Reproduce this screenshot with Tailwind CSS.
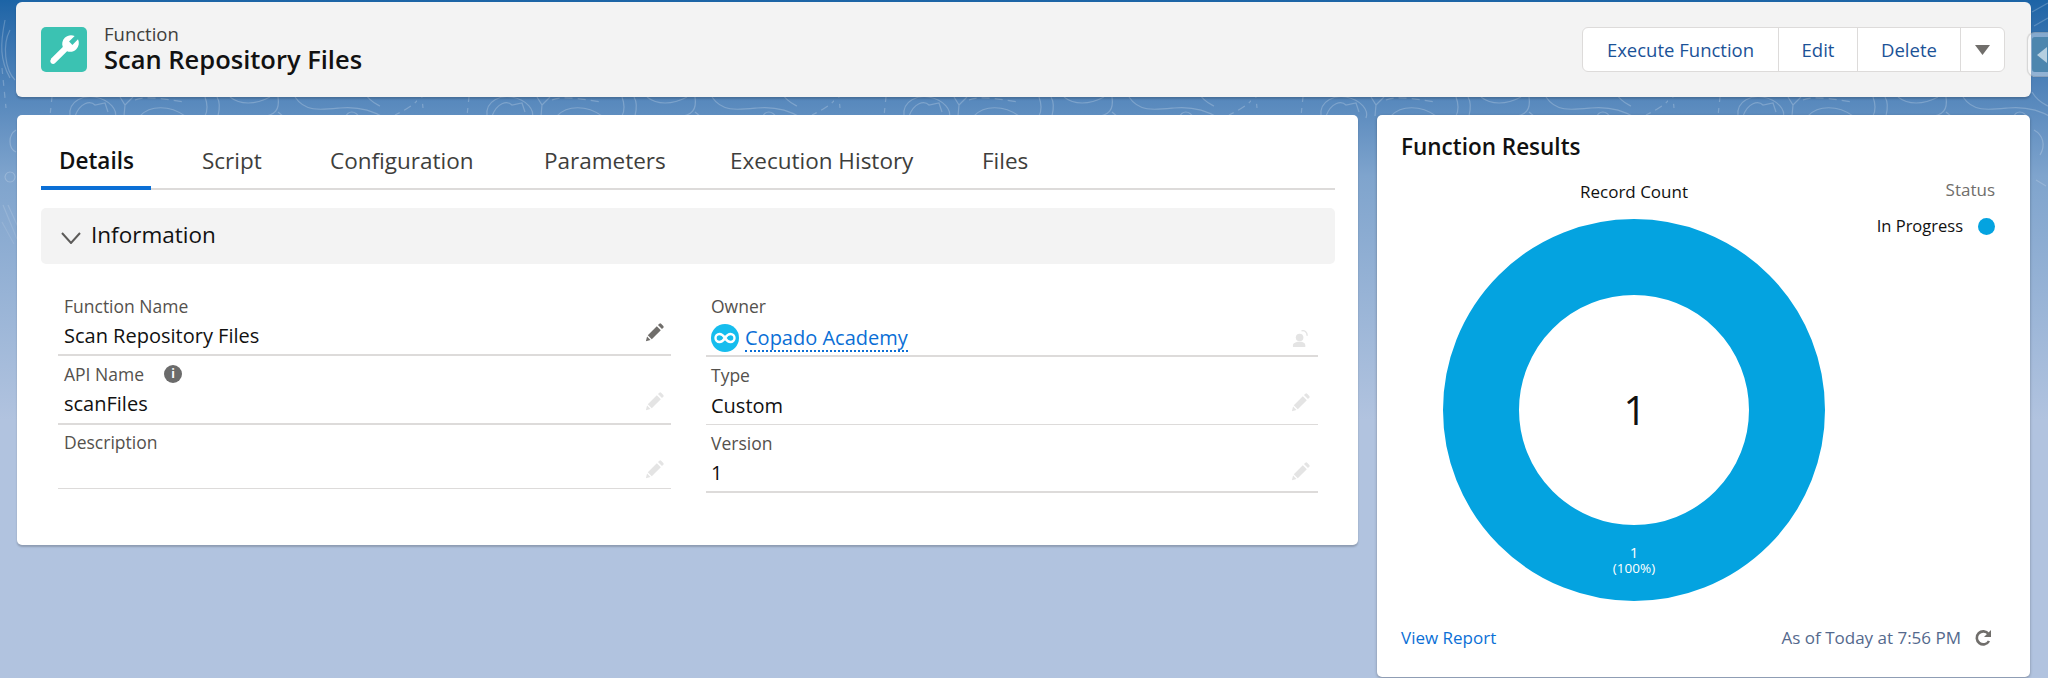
<!DOCTYPE html>
<html lang="en">
<head>
<meta charset="utf-8">
<script src="https://cdn.jsdelivr.net/npm/@tailwindcss/browser@4"></script>
<title>Scan Repository Files</title>
</head>
<body class="m-0 overflow-hidden">
<svg width="0" height="0" class="absolute">
  <defs>
    <symbol id="pencil" viewBox="0 0 20 20">
      <path fill="currentColor" d="M3.600 12.600 12.200 4l3.800 3.800-8.600 8.600zM2.900 13.800l3.300 3.300-4.400 1.200zM13.300 2.900l1.300-1.300a1.200 1.200 0 0 1 1.700 0l2.100 2.100a1.200 1.200 0 0 1 0 1.700l-1.300 1.300z"/>
    </symbol>
  </defs>
</svg>
<div class="relative w-[2048px] h-[678px] overflow-hidden bg-gradient-to-b from-[#1c64a6] via-[#7fa4cd] via-[26%] to-[#b1c3df] to-[62%] font-['Open_Sans',sans-serif]">

  <!-- decorative contour lines of the page background -->
  <svg class="absolute left-0 top-0 [mask-image:linear-gradient(to_bottom,black_55%,transparent)]" width="2048" height="290">
    <defs>
      <pattern id="contours" width="417" height="290" patternUnits="userSpaceOnUse">
        <g fill="none" stroke="#fff" stroke-opacity="0.22" stroke-width="1.200">
          <path d="M70 116C68 100 85 95 95 97 110 100 118 110 115 118"/>
          <path d="M75 116C80 103 90 100 95 105L105 103 108 112"/>
          <path stroke-dasharray="5 6" d="M52 97 50 116"/>
          <path d="M120 97 125 105 133 97M125 105 124 116"/>
          <path d="M140 116C150 105 170 105 185 116"/>
          <path stroke-dasharray="8 5" d="M135 100C145 95 170 100 185 102"/>
          <path d="M205 97C208 105 208 110 205 116M218 116C220 108 220 102 217 97"/>
          <path d="M230 97C240 105 255 105 270 97M278 97C280 110 275 115 262 117M278 112l6 5"/>
          <path d="M295 97C305 112 320 110 340 108 360 106 375 112 385 118M345 118C348 110 355 110 360 118"/>
          <path stroke-dasharray="8 5" d="M420 97C415 105 405 110 395 115"/>
          <path d="M10 30C2 45 5 70 15 80M5 20C0 45 0 60 10 78"/>
          <path stroke-dasharray="6 6" d="M2 68 6 108"/>
          <path d="M16 130C8 135 8 148 16 152M10 172a5 5 0 1 0 .1 0M3 205l14 34M2 222l12 22M8 205l10 22"/>
          <path d="M364 12 380 3M366 26 380 18M364 92C370 102 376 104 380 106M366 130C375 135 378 145 372 155M368 180l10 6"/>
        </g>
      </pattern>
    </defs>
    <rect width="2048" height="290" fill="url(#contours)"/>
  </svg>

  <div class="relative pt-[2px] pl-[16px]">
    <!-- header -->
    <header class="w-[2015px] h-[95px] bg-[#f3f3f3] rounded-[6px] shadow-[0_2px_2px_rgba(0,0,0,0.18)] flex items-center pl-[25px] pr-[26px]">
      <div class="w-[46px] h-[45px] rounded-[5px] bg-[#3bc2b2] flex items-center justify-center shrink-0">
        <svg class="w-[32px] h-[32px] -scale-x-100" viewBox="0 0 24 24"><path fill="#fff" d="M21.800 18.600 12.900 9.700c.9-2.300.4-5-1.500-6.900-2-2-5-2.400-7.400-1.300L8.200 5.700 5.700 8.200 1.500 4c-1.200 2.400-.7 5.400 1.300 7.400 1.900 1.900 4.600 2.400 6.900 1.500l8.900 8.900c.9.900 2.200.9 3 .1s.9-2.200.2-2.800z"/></svg>
      </div>
      <div class="ml-[17px] mb-[4px] flex flex-col">
        <span class="text-[18.500px] leading-[22px] text-[#3e3e3c]">Function</span>
        <span class="text-[25.500px] leading-[28px] font-semibold text-[#111]">Scan Repository Files</span>
      </div>
      <div class="ml-auto flex h-[45px] w-[423px] bg-white rounded-[6px] border border-[#dddbda] text-[18.500px] text-[#1b5297]">
        <button class="w-[196px] border-r border-[#dddbda]">Execute Function</button>
        <button class="w-[79px] border-r border-[#dddbda]">Edit</button>
        <button class="w-[103px] border-r border-[#dddbda]">Delete</button>
        <button class="flex-1 flex items-center justify-center"><svg class="w-[15px] h-[10px]" viewBox="0 0 15 10"><path fill="#706e6b" d="M0 0h15L7.500 10z"/></svg></button>
      </div>
    </header>

    <div class="flex mt-[18px] items-start">
      <!-- main card -->
      <main class="w-[1341px] h-[430px] ml-[1px] bg-white rounded-[5px] shadow-[0_2px_2px_rgba(0,0,0,0.2)] pl-[24px] pr-[23px] pt-[23px]">
        <nav class="flex h-[52px] border-b-2 border-[#dddbda] text-[22.500px] leading-[46px] text-[#3e3e3c]">
          <a class="w-[110px] pl-[18px] font-semibold text-[#111] border-b-4 border-[#0b6fd6] h-[52px]">Details</a>
          <a class="ml-[51px] w-[128px]">Script</a>
          <a class="w-[214px]">Configuration</a>
          <a class="w-[186px]">Parameters</a>
          <a class="w-[252px]">Execution History</a>
          <a>Files</a>
        </nav>
        <section class="mt-[18px] h-[56px] rounded-[5px] bg-[#f3f3f3] flex items-center pl-[20px] pb-[2px] text-[22.500px] text-[#111]">
          <svg class="w-[20px] h-[12px] mt-[5px]" viewBox="0 0 20 12"><path fill="none" stroke="#5c5b59" stroke-width="2" d="M1 1l9 10 9-10"/></svg>
          <span class="ml-[10px]">Information</span>
        </section>
        <div class="grid grid-cols-[613px_612px] gap-x-[35px] ml-[17px] mt-[31px]">
          <div class="flex flex-col">
            <div class="relative h-[61px] border-b-2 border-[#dddbda] px-[6px]">
              <div class="text-[17.500px] leading-[22px] text-[#54514d]">Function Name</div>
              <div class="text-[20px] leading-[26px] mt-[6px] text-[#111]">Scan Repository Files</div>
              <svg class="absolute right-[6px] top-[27px] w-[21px] h-[21px] text-[#706e6b]"><use href="#pencil"/></svg>
            </div>
            <div class="relative h-[69px] border-b-2 border-[#dddbda] px-[6px] pt-[7px]">
              <div class="flex items-center text-[17.500px] leading-[22px] text-[#54514d]">API Name
                <span class="ml-[20px] w-[18px] h-[18px] rounded-full bg-[#6b6b6b] text-white text-[12px] leading-[18px] font-bold text-center">i</span></div>
              <div class="text-[20px] leading-[26px] mt-[6px] text-[#111]">scanFiles</div>
              <svg class="absolute right-[6px] top-[35px] w-[21px] h-[21px] text-[#e4e4e4]"><use href="#pencil"/></svg>
            </div>
            <div class="relative h-[64px] border-b border-[#dddbda] px-[6px] pt-[6px]">
              <div class="text-[17.500px] leading-[22px] text-[#54514d]">Description</div>
              <svg class="absolute right-[6px] top-[34px] w-[21px] h-[21px] text-[#e4e4e4]"><use href="#pencil"/></svg>
            </div>
          </div>
          <div class="flex flex-col">
            <div class="relative h-[62px] border-b-2 border-[#dddbda] px-[5px]">
              <div class="text-[17.500px] leading-[22px] text-[#54514d]">Owner</div>
              <div class="flex items-center mt-[7px] h-[28px]">
                <svg class="w-[28px] h-[28px] shrink-0" viewBox="0 0 28 28"><circle cx="14" cy="14" r="14" fill="#16bdee"/><path fill="none" stroke="#fff" stroke-width="2.400" d="M14 14c-2-3-3.500-4-5.500-4a4 4 0 0 0 0 8c2 0 3.500-1 5.500-4s3.500-4 5.500-4a4 4 0 0 1 0 8c-2 0-3.500-1-5.500-4z"/></svg>
                <a class="ml-[6px] text-[20px] leading-[25px] text-[#0b6fd6] border-b-2 border-dotted border-[#0b6fd6]">Copado Academy</a>
              </div>
              <svg class="absolute right-[7px] top-[34px] w-[19px] h-[19px]" viewBox="0 0 20 20"><circle cx="8" cy="9" r="4" fill="#e4e4e4"/><path fill="#e4e4e4" d="M1 19v-2c0-2 3-3 5-3.500h4c2 .5 4 1.500 4 3.500v2z"/><path fill="none" stroke="#e4e4e4" stroke-width="1.500" d="M10 2c3-1 6 1 6 5"/></svg>
            </div>
            <div class="relative h-[68px] border-b border-[#dddbda] px-[5px] pt-[7px]">
              <div class="text-[17.500px] leading-[22px] text-[#54514d]">Type</div>
              <div class="text-[20px] leading-[26px] mt-[7px] text-[#111]">Custom</div>
              <svg class="absolute right-[7px] top-[35px] w-[21px] h-[21px] text-[#e4e4e4]"><use href="#pencil"/></svg>
            </div>
            <div class="relative h-[68px] border-b-2 border-[#dddbda] px-[5px] pt-[7px]">
              <div class="text-[17.500px] leading-[22px] text-[#54514d]">Version</div>
              <div class="text-[20px] leading-[26px] mt-[6px] text-[#111]">1</div>
              <svg class="absolute right-[7px] top-[36px] w-[21px] h-[21px] text-[#e4e4e4]"><use href="#pencil"/></svg>
            </div>
          </div>
        </div>
      </main>

      <!-- results card -->
      <aside class="relative w-[653px] h-[562px] ml-[19px] bg-white rounded-[5px] shadow-[0_1px_3px_rgba(0,0,0,0.3)] px-[24px]">
        <h2 class="pt-[18px] text-[22.500px] leading-[28px] font-semibold text-[#111]">Function Results</h2>
        <div class="absolute right-[35px] top-[63px] flex flex-col items-end">
          <span class="text-[17px] leading-[24px] text-[#706e6b]">Status</span>
          <span class="flex items-center mt-[12px] text-[16.500px] leading-[24px] text-[#111]">In Progress<span class="ml-[15px] w-[17px] h-[17px] rounded-full bg-[#04a3e0]"></span></span>
        </div>
        <div class="w-[382px] ml-[42px] mt-[19px] text-center text-[17px] leading-[24px] text-[#111]">Record Count</div>
        <svg class="block ml-[42px] mt-[15px] font-['Open_Sans',sans-serif]" width="382" height="382" viewBox="0 0 382 382">
          <circle cx="191" cy="191" r="153" fill="none" stroke="#04a3e0" stroke-width="76"/>
          <text x="192" y="206" text-anchor="middle" font-size="40" fill="#111">1</text>
          <text x="191" y="339" text-anchor="middle" font-size="15" fill="#fff">1</text>
          <text x="191" y="354" text-anchor="middle" font-size="13.500" fill="#fff">(100%)</text>
        </svg>
        <div class="flex items-center mt-[25px] text-[17px] leading-[24px] pr-[14px]">
          <a class="text-[#0b6fd6]">View Report</a>
          <span class="ml-auto text-[#54698d]">As of Today at 7:56 PM</span>
          <svg class="ml-[13px] w-[18px] h-[18px]" viewBox="0 0 18 18"><path fill="none" stroke="#706e6b" stroke-width="2.600" d="M14.500 5A6.500 6.500 0 1 0 15 12"/><path fill="#706e6b" d="M17 1v7h-7z"/></svg>
        </div>
      </aside>
    </div>
  </div>

  <!-- collapsed side tab, over the header's edge -->
  <div class="absolute left-[2027px] top-[32px] w-[30px] h-[45px] rounded-[8px] border-[5px] border-white/40 bg-[#4d86ae] bg-clip-padding shadow-[0_0_1px_rgba(0,0,0,0.25)] flex items-center pl-[5px]">
    <svg class="w-[10px] h-[16px]" viewBox="0 0 10 16"><path fill="#b5cfe0" d="M10 0v16L0 8z"/></svg>
  </div>
</div>
</body>
</html>
